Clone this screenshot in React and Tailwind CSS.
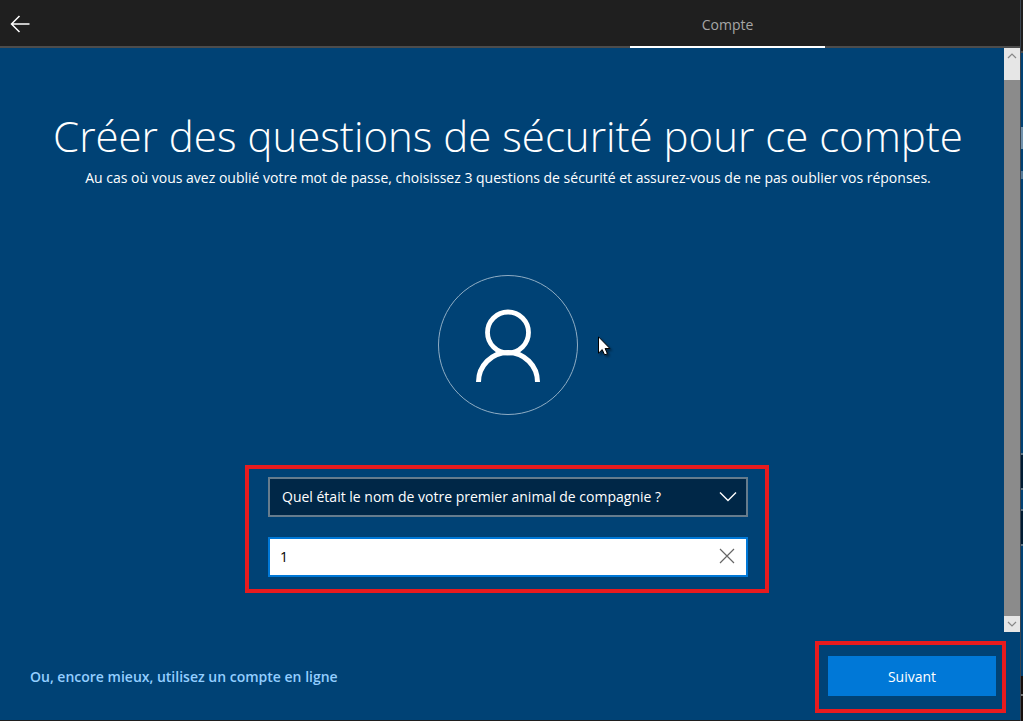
function Scrollbar() {
  return (
    <div className="flex w-4 shrink-0 flex-col bg-[#8b8b8b]" aria-hidden="true">
      <div className="flex h-8 justify-center bg-[#e6e6e6] pt-1">
        <svg width="10" height="8" viewBox="0 0 10 8" fill="none" stroke="#888" strokeWidth="1.2">
          <path d="M1 6 5 2l4 4" />
        </svg>
      </div>
      <div className="mt-auto flex h-4 items-center justify-center bg-[#e6e6e6]">
        <svg width="10" height="8" viewBox="0 0 10 8" fill="none" stroke="#888" strokeWidth="1.2">
          <path d="M1 2l4 4 4-4" />
        </svg>
      </div>
    </div>
  );
}

function Avatar() {
  return (
    <svg className="mt-[87px]" width="140" height="140" viewBox="0 0 140 140" fill="none" aria-hidden="true">
      <circle cx="70" cy="70" r="69.5" stroke="#8fadc4" strokeWidth="1" />
      <circle cx="70" cy="57.5" r="20.5" stroke="#fff" strokeWidth="4.8" />
      <path d="M40.5 107a29.500 29.500 0 0 1 59 0" stroke="#fff" strokeWidth="5" />
    </svg>
  );
}

function Pointer() {
  return (
    <svg
      className="absolute left-[598px] top-[288px] drop-shadow-[2px_2px_1px_rgba(0,0,0,0.4)]"
      width="14"
      height="21"
      viewBox="0 0 14 21"
      aria-hidden="true"
    >
      <path d="M.5.8v16.400l3.700-3.600 2.400 5.300 2.800-1.200-2.300-5.200h4.800z" fill="#fff" stroke="#000" strokeWidth="1" />
    </svg>
  );
}

/* Sliver of the window that sits behind the setup window. */
function BackWindow() {
  return (
    <div className="flex w-[3px] shrink-0 flex-col border-l border-[#3b4550] bg-[#004275]" aria-hidden="true">
      <div className="h-[53px] border-b-2 border-[#4c4c4c] bg-[#1f1f1f]" />
      <div className="mt-[74px] h-[22px] bg-[#7092ad]" />
      <div className="mt-[22px] h-2 bg-[#547c9c]" />
      <div className="mt-[274px] h-[37px] border-y-2 border-[#5f7688] bg-[#001c33]" />
      <div className="mt-[19px] h-[37px] border-y-2 border-[#5f7688] bg-[#001c33]" />
      <div className="mt-auto h-[45px] bg-[#17100e] pt-[18px]">
        <div className="h-0.5 bg-[#777]" />
      </div>
    </div>
  );
}

export default function App() {
  return (
    <div className="flex min-h-screen bg-[#004275] font-['Open_Sans','Noto_Sans',sans-serif] text-sm text-white">
      <div className="flex min-w-0 flex-1 flex-col border-b border-[#1f1f1f]">
        <header className="flex h-12 justify-between bg-[#1f1f1f] shadow-[inset_0_-2px_0_#4c4c4c]">
          <button type="button" aria-label="Retour" className="flex w-10 items-center justify-center">
            <svg width="20" height="18" viewBox="0 0 20 18" fill="none" stroke="#fff" strokeWidth="1.500">
              <path d="M19.500 9H1.500M9.500 1 1.500 9l8 8" />
            </svg>
          </button>
          <nav className="mr-[195px] flex">
            <a
              href="#compte"
              className="flex w-[195px] items-center justify-center border-b-2 border-white pt-1 text-[#a6a6a6]"
            >
              Compte
            </a>
          </nav>
        </header>

        <div className="relative flex flex-1">
          <main className="flex flex-1 flex-col items-center pl-3">
            <h1 className="mt-[60px] whitespace-nowrap text-[42px] leading-[56px] font-light">
              Créer des questions de sécurité pour ce compte
            </h1>
            <p className="mt-1 whitespace-nowrap leading-5">
              Au cas où vous avez oublié votre mot de passe, choisissez 3 questions de sécurité et assurez-vous de ne
              pas oublier vos réponses.
            </p>
            <Avatar />
            <form className="relative mt-[62px] flex w-[480px] flex-col gap-5">
              <div className="pointer-events-none absolute -top-3 -right-[21px] -bottom-4 -left-[23px] border-4 border-[#e81b1e]" />
              <div className="relative">
                <select
                  aria-label="Question de sécurité"
                  className="block h-10 w-full appearance-none border-2 border-[#667c8d] bg-[#002747] px-3 text-white"
                >
                  <option>Quel était le nom de votre premier animal de compagnie ?</option>
                </select>
                <svg
                  className="pointer-events-none absolute top-3.5 right-[11px]"
                  width="18"
                  height="12"
                  viewBox="0 0 18 12"
                  fill="none"
                  stroke="#fff"
                  strokeWidth="1.400"
                >
                  <path d="M1 1.500 9 9.500l8-8" />
                </svg>
              </div>
              <div className="flex h-10 border-2 border-[#0078d7] bg-white">
                <input
                  aria-label="Votre réponse"
                  defaultValue="1"
                  className="min-w-0 flex-1 px-2.5 text-black outline-none"
                />
                <button type="button" aria-label="Effacer" className="flex w-[38px] items-center justify-center pb-0.5">
                  <svg width="16" height="16" viewBox="0 0 16 16" fill="none" stroke="#666" strokeWidth="1.200">
                    <path d="m1 1 14 14M15 1 1 15" />
                  </svg>
                </button>
              </div>
            </form>
          </main>
          <Scrollbar />
          <Pointer />
        </div>

        <footer className="flex h-[88px] items-center justify-between pr-6 pl-[30px]">
          <a href="#en-ligne" className="pt-0.5 font-semibold text-[#93ceff]">
            Ou, encore mieux, utilisez un compte en ligne
          </a>
          <div className="relative">
            <div className="pointer-events-none absolute -top-[15px] -right-2.5 -bottom-[17px] -left-[13px] border-4 border-[#e81b1e]" />
            <button type="button" className="h-10 w-[168px] bg-[#0078d7] pt-0.5">
              Suivant
            </button>
          </div>
        </footer>
      </div>
      <BackWindow />
    </div>
  );
}
